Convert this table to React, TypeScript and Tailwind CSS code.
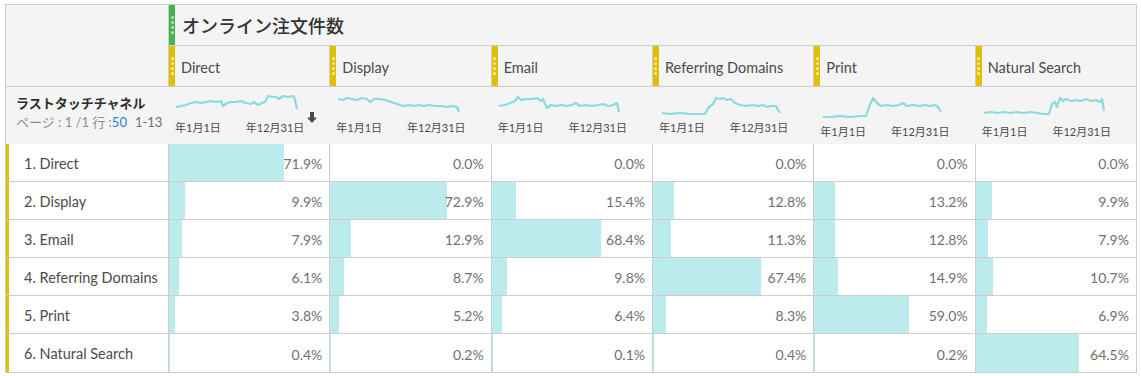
import React from 'react'

type Col = {
  name: string
  line: [number, number][]
  left: number
  datePad: string
}

// sparkline points are page coords; converted to cell-local below
const cols: Col[] = [
  {
    name: 'Direct',
    left: 168,
    datePad: 'pt-[2px]',
    line: [
      [175, 108], [180, 107], [185, 106], [190, 104], [195, 103], [200, 104], [205, 103], [210, 102], [215, 103],
      [220, 102], [222, 107], [226, 104], [230, 103], [235, 103], [240, 102], [245, 104], [250, 105], [253, 103],
      [257, 106], [261, 104], [264, 103], [267, 97], [271, 98], [275, 98], [278, 100], [282, 97], [287, 98],
      [293, 97], [296, 110],
    ],
  },
  {
    name: 'Display',
    left: 329,
    datePad: 'pt-[2px]',
    line: [
      [337, 100], [342, 101], [346, 99], [351, 100], [356, 101], [361, 99], [366, 100], [369, 103], [373, 100],
      [379, 100], [384, 101], [390, 103], [396, 105], [402, 107], [408, 106], [413, 107], [418, 106], [423, 107],
      [428, 106], [434, 107], [440, 107], [446, 108], [452, 107], [456, 108], [458, 113],
    ],
  },
  {
    name: 'Email',
    left: 492,
    datePad: 'pt-[2px]',
    line: [
      [499, 107], [505, 106], [510, 104], [515, 102], [518, 98], [521, 101], [527, 100], [533, 100], [537, 99],
      [541, 102], [543, 100], [547, 109], [551, 106], [556, 107], [561, 106], [567, 107], [572, 106], [576, 104],
      [580, 107], [586, 106], [592, 107], [598, 106], [603, 105], [608, 107], [613, 106], [617, 104], [619, 113],
    ],
  },
  {
    name: 'Referring Domains',
    left: 653,
    datePad: 'pt-[2px]',
    line: [
      [662, 114], [670, 115], [680, 114], [690, 115], [700, 115], [705, 115], [709, 108], [713, 105], [716, 99],
      [720, 100], [723, 99], [727, 101], [731, 100], [735, 104], [740, 106], [746, 107], [752, 106], [758, 107],
      [763, 106], [767, 108], [771, 107], [776, 107], [780, 114],
    ],
  },
  {
    name: 'Print',
    left: 814,
    datePad: 'pt-[6px]',
    line: [
      [823, 118], [830, 118], [840, 117], [850, 118], [860, 117], [866, 117], [869, 108], [873, 99], [877, 104],
      [881, 107], [887, 106], [893, 107], [899, 106], [903, 104], [907, 107], [913, 106], [919, 107], [925, 106],
      [930, 107], [935, 106], [938, 108], [941, 113],
    ],
  },
  {
    name: 'Natural Search',
    left: 975,
    datePad: 'pt-[6px]',
    line: [
      [983, 114], [990, 113], [996, 114], [1003, 113], [1010, 114], [1016, 113], [1022, 114], [1030, 113],
      [1036, 114], [1043, 115], [1048, 115], [1051, 105], [1054, 103], [1056, 108], [1059, 99], [1062, 102],
      [1065, 100], [1070, 102], [1075, 101], [1080, 102], [1085, 100], [1090, 102], [1095, 101], [1099, 103],
      [1101, 100], [1103, 112],
    ],
  },
]

const rows: { label: string; values: number[] }[] = [
  { label: '1. Direct', values: [71.9, 0, 0, 0, 0, 0] },
  { label: '2. Display', values: [9.9, 72.9, 15.4, 12.8, 13.2, 9.9] },
  { label: '3. Email', values: [7.9, 12.9, 68.4, 11.3, 12.8, 7.9] },
  { label: '4. Referring Domains', values: [6.1, 8.7, 9.8, 67.4, 14.9, 10.7] },
  { label: '5. Print', values: [3.8, 5.2, 6.4, 8.3, 59.0, 6.9] },
  { label: '6. Natural Search', values: [0.4, 0.2, 0.1, 0.4, 0.2, 64.5] },
]

function Grip({ color, dot }: { color: string; dot: string }) {
  return (
    <div className={`w-[6px] h-full flex-shrink-0 flex flex-col items-center justify-center gap-[2px] ${color}`}>
      {[0, 1, 2, 3].map((i) => (
        <span key={i} className={`w-[3px] h-[3px] rounded-full ${dot}`} />
      ))}
    </div>
  )
}

function Sparkline({ col }: { col: Col }) {
  const pts = col.line.map(([x, y]) => `${x - col.left},${y - 88}`).join(' ')
  return (
    <svg width="160" height="32" className="block overflow-visible">
      <polyline points={pts} fill="none" stroke="#8adbdd" strokeWidth="2.2" strokeLinejoin="round" />
    </svg>
  )
}

export default function App() {
  return (
    <div className="w-[1141px] h-[376px] bg-white pt-[4px] pl-[5px] font-['Lato','Noto_Sans_CJK_JP',sans-serif] text-[#4b4b4b]">
      <div className="w-[1132px] border border-[#cdcdcd]">
        {/* header: metric + dimension columns */}
        <div className="flex bg-[#f4f4f4] border-b border-[#cdcdcd]">
          <div className="w-[162px] flex-shrink-0" />
          <div className="flex-1 min-w-0 flex flex-col">
            <div className="h-[41px] flex items-stretch border-l border-b border-[#cdcdcd]">
              <Grip color="bg-[#47b253]" dot="bg-[#b3e2b5]" />
              <span className="ml-[7px] mt-[2px] self-center text-[18px] font-medium text-[#323232]">
                オンライン注文件数
              </span>
            </div>
            <div className="h-[40px] flex">
              {cols.map((c) => (
                <div key={c.name} className="flex-1 min-w-0 flex items-stretch border-l border-[#cdcdcd]">
                  <Grip color="bg-[#e0bf00]" dot="bg-[#f8e9a0]" />
                  <span className="ml-[6px] mt-[3px] self-center text-[14.5px] whitespace-nowrap">{c.name}</span>
                </div>
              ))}
            </div>
          </div>
        </div>

        {/* sparkline row */}
        <div className="flex h-[57px] bg-[#f4f4f4]">
          <div className="w-[162px] flex-shrink-0 pl-[10px] pt-[7px]">
            <div className="text-[13px] leading-[18px] font-bold text-[#2c2c2c]">ラストタッチチャネル</div>
            <div className="mt-[1px] text-[13px] leading-[18px] text-[#8e8e8e] whitespace-nowrap">
              ページ : 1 /1 行 :<span className="text-[#2d7fe0]">50</span>
              <span className="ml-[8px] text-[#707070]">1-13</span>
            </div>
          </div>
          {cols.map((c, i) => (
            <div key={c.name} className="relative flex-1 min-w-0 border-l border-transparent">
              <Sparkline col={c} />
              <div className={`flex gap-[25px] pl-[6px] text-[11px] leading-[14px] text-[#4b4b4b] whitespace-nowrap ${c.datePad}`}>
                <span>年1月1日</span>
                <span>年12月31日</span>
              </div>
              {i === 0 && (
                <svg width="10" height="11" viewBox="0 0 10 11" className="absolute left-[138px] top-[25px]">
                  <path d="M3 0h4v5.5h3L5 11 0 5.5h3z" fill="#4b4b4b" />
                </svg>
              )}
            </div>
          ))}
        </div>

        {/* data rows */}
        {rows.map((r, ri) => (
          <div
            key={r.label}
            className={`flex h-[38px] ${ri < rows.length - 1 ? 'border-b border-[#cdcdcd]' : ''}`}
          >
            <div className="w-[162px] flex-shrink-0 flex items-center">
              <span className="w-[3px] h-full bg-[#e0bf00]" />
              <span className="ml-[15px] pt-[2px] text-[14.5px] whitespace-nowrap">{r.label}</span>
            </div>
            {r.values.map((v, ci) => (
              <div
                key={ci}
                className="relative flex-1 min-w-0 flex items-center justify-end pr-[7px] pt-[2px] border-l border-[#cdcdcd]"
              >
                {v > 0 && (
                  <span
                    className="absolute left-0 top-0 bottom-0 bg-[#bbebed]"
                    style={{ width: `max(1px, ${v}%)` }}
                  />
                )}
                <span className="relative text-[14px] text-[#707070]">{v.toFixed(1)}%</span>
              </div>
            ))}
          </div>
        ))}
      </div>
    </div>
  )
}
